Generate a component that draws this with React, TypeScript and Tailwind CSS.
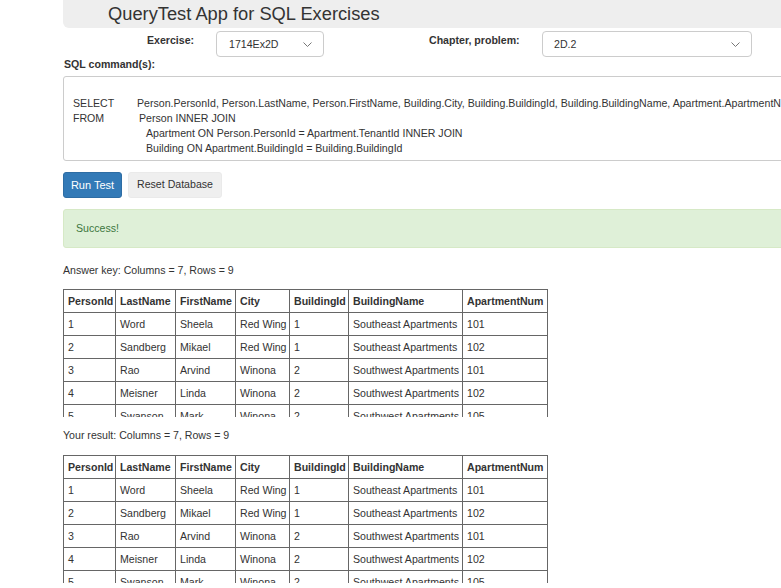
import React from "react";

const cols = [
  { name: "PersonId", w: 52 },
  { name: "LastName", w: 60 },
  { name: "FirstName", w: 60 },
  { name: "City", w: 54 },
  { name: "BuildingId", w: 59 },
  { name: "BuildingName", w: 114 },
  { name: "ApartmentNum", w: 85 },
];

const rows = [
  ["1", "Word", "Sheela", "Red Wing", "1", "Southeast Apartments", "101"],
  ["2", "Sandberg", "Mikael", "Red Wing", "1", "Southeast Apartments", "102"],
  ["3", "Rao", "Arvind", "Winona", "2", "Southwest Apartments", "101"],
  ["4", "Meisner", "Linda", "Winona", "2", "Southwest Apartments", "102"],
  ["5", "Swanson", "Mark", "Winona", "2", "Southwest Apartments", "105"],
  ["6", "Lee", "Ann", "Winona", "2", "Southwest Apartments", "106"],
  ["7", "Olson", "Tom", "Winona", "2", "Southwest Apartments", "201"],
  ["8", "Hanson", "Kari", "Red Wing", "1", "Southeast Apartments", "201"],
  ["9", "Berg", "Joan", "Red Wing", "1", "Southeast Apartments", "202"],
];

function Chevron() {
  return (
    <svg width="9" height="5" viewBox="0 0 9 5" className="text-[#777]">
      <path d="M0.5 0.5 L4.5 4.5 L8.5 0.5" fill="none" stroke="currentColor" strokeWidth="1" />
    </svg>
  );
}

function ResultTable() {
  return (
    <div className="h-[128px] overflow-hidden">
      <table className="border-collapse table-fixed" style={{ width: 484 }}>
        <colgroup>
          {cols.map((c) => (
            <col key={c.name} style={{ width: c.w }} />
          ))}
        </colgroup>
        <thead>
          <tr>
            {cols.map((c) => (
              <th
                key={c.name}
                className="border border-[#666] px-[4px] h-[23px] text-left font-bold text-[10.6px] leading-[14px] whitespace-nowrap"
              >
                {c.name}
              </th>
            ))}
          </tr>
        </thead>
        <tbody>
          {rows.map((r, i) => (
            <tr key={i}>
              {r.map((v, j) => (
                <td
                  key={j}
                  className="border border-[#666] px-[4px] h-[23px] text-[10.6px] leading-[14px] whitespace-nowrap"
                >
                  {v}
                </td>
              ))}
            </tr>
          ))}
        </tbody>
      </table>
    </div>
  );
}

export default function App() {
  return (
    <div
      className="w-[781px] h-[588px] overflow-hidden bg-white text-[#333] text-[10.6px]"
      style={{ fontFamily: '"Liberation Sans", Arial, sans-serif' }}
    >
      <div className="ml-[63px]">
        {/* Header */}
        <div className="h-[28px] w-[760px] bg-[#eeeeee] rounded-bl-[6px] pl-[45px] flex items-center">
          <h1 className="text-[18.3px] leading-[22px] text-[#333] font-normal">
            QueryTest App for SQL Exercises
          </h1>
        </div>

        {/* Selectors */}
        <div className="flex mt-[3px] h-[25px]">
          <div className="w-[153px] pl-[84px] pt-[3px] font-bold leading-[13px]">Exercise:</div>
          <div className="w-[108px] h-[26px] border border-[#ccc] rounded-[4px] flex items-center justify-between pl-[12px] pr-[11px]">
            <span className="pt-[2px]">1714Ex2D</span>
            <Chevron />
          </div>
          <div className="w-[218px] pl-[105px] pt-[3px] font-bold leading-[13px]">Chapter, problem:</div>
          <div className="w-[210px] h-[26px] border border-[#ccc] rounded-[4px] flex items-center justify-between pl-[11px] pr-[11px]">
            <span className="pt-[2px]">2D.2</span>
            <Chevron />
          </div>
        </div>

        <div className="mt-[2px] font-bold leading-[13px] pl-[1px]">SQL command(s):</div>

        {/* SQL box */}
        <div className="mt-[5px] w-[740px] h-[85px] border border-[#ccc] rounded-[3px] pl-[9px] pt-[4px] leading-[15px] whitespace-nowrap overflow-hidden">
          <div className="h-[15px]" />
          <div className="flex">
            <span className="w-[64px] shrink-0">SELECT</span>
            <span>
              Person.PersonId, Person.LastName, Person.FirstName, Building.City, Building.BuildingId,
              Building.BuildingName, Apartment.ApartmentNum
            </span>
          </div>
          <div className="flex">
            <span className="w-[66px] shrink-0">FROM</span>
            <span>Person INNER JOIN</span>
          </div>
          <div className="pl-[73px]">Apartment ON Person.PersonId = Apartment.TenantId INNER JOIN</div>
          <div className="pl-[73px]">Building ON Apartment.BuildingId = Building.BuildingId</div>
        </div>

        {/* Buttons */}
        <div className="flex gap-[6px] mt-[11px]">
          <button className="h-[26px] w-[59px] bg-[#337ab7] border border-[#2e6da4] rounded-[3px] text-white text-[11px]">
            Run Test
          </button>
          <button className="h-[26px] w-[94px] bg-[#efefef] border border-[#eaeaea] rounded-[3px] text-[#333] text-[10.6px]">
            Reset Database
          </button>
        </div>

        {/* Alert */}
        <div className="mt-[11px] w-[740px] h-[39px] bg-[#dff0d8] border border-[#d6e9c6] rounded-[3px] pl-[12px] flex items-center text-[#3c763d]">
          Success!
        </div>

        <div className="mt-[16px] leading-[13px]">Answer key: Columns = 7, Rows = 9</div>
        <div className="mt-[12px]">
          <ResultTable />
        </div>

        <div className="mt-[12px] leading-[13px]">Your result: Columns = 7, Rows = 9</div>
        <div className="mt-[13px]">
          <ResultTable />
        </div>
      </div>
    </div>
  );
}
